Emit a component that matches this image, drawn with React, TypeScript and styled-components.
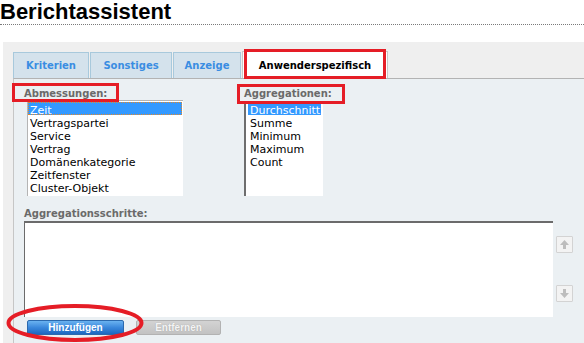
import React from "react";
import styled, { createGlobalStyle, css } from "styled-components";

const GlobalStyle = createGlobalStyle`
  html, body { margin: 0; padding: 0; background: #ffffff; }
  body {
    width: 584px;
    height: 343px;
    overflow: hidden;
    font-family: "DejaVu Sans", Verdana, sans-serif;
  }
  * { box-sizing: border-box; }
`;

const RED = "#e51d26";

type Inset = { t: number; r: number; b: number; l: number };

const annotate = (i: Inset) => css`
  position: relative;
  &::after {
    content: "";
    position: absolute;
    top: ${-i.t}px;
    right: ${-i.r}px;
    bottom: ${-i.b}px;
    left: ${-i.l}px;
    border: 3px solid ${RED};
    pointer-events: none;
  }
`;

const Page = styled.div`
  width: 584px;
  height: 343px;
  overflow: hidden;
  display: flex;
  flex-direction: column;
`;

const Title = styled.h1`
  margin: 0;
  padding: 0;
  height: 25px;
  font: bold 22px/24px "Liberation Sans", Arial, sans-serif;
  color: #000;
  border-bottom: 1px dotted #7a7a7a;
`;

const Panel = styled.div`
  margin: 17px 0 0 3px;
  flex: 1;
  background: #efefef;
  padding: 10px 0 0 10px;
  display: flex;
  flex-direction: column;
`;

const TabBar = styled.div`
  display: flex;
  align-items: flex-end;
  gap: 1px;
  height: 26px;
`;

const Tab = styled.div<{ $width: number; $active?: boolean }>`
  width: ${(p) => p.$width}px;
  height: 26px;
  display: flex;
  align-items: center;
  justify-content: center;
  padding-top: 1px;
  background: #d4e2ec;
  border: 1px solid #a8c9dc;
  border-bottom: none;
  color: #3a8de2;
  font: bold 10px/12px "DejaVu Sans", Verdana, sans-serif;
  white-space: nowrap;
  ${(p) =>
    p.$active &&
    css`
      height: 27px;
      background: #ffffff;
      border-color: #c8c8c8;
      color: #000000;
      ${annotate({ t: 3, r: -1, b: 1, l: -1 })}
    `}
`;

const Content = styled.div`
  flex: 1;
  background: #ebf0f3;
  border-top: 1px solid #b3b3b3;
  border-left: 1px solid #c6c6c6;
  padding: 8px 0 0 10px;
  display: flex;
  flex-direction: column;
`;

const SelectorRow = styled.div`
  display: flex;
  gap: 61px;
`;

const Column = styled.div<{ $width: number }>`
  width: ${(p) => p.$width}px;
  display: flex;
  flex-direction: column;
`;

const FieldLabel = styled.span<{ $mark?: Inset }>`
  align-self: flex-start;
  font: bold 10px/13px "DejaVu Sans", Verdana, sans-serif;
  color: #6a6a6a;
  white-space: nowrap;
  ${(p) => p.$mark && annotate(p.$mark)}
`;

const StepsLabel = styled(FieldLabel)`
  margin-top: 11px;
`;

const ListBox = styled.div<{ $width: number; $height: number; $variant: "soft" | "dark" }>`
  width: ${(p) => p.$width}px;
  height: ${(p) => p.$height}px;
  background: #ffffff;
  font: 11px/13px "DejaVu Sans", Verdana, sans-serif;
  color: #000;
  ${(p) =>
    p.$variant === "soft"
      ? css`
          margin: 0 0 0 3px;
          border-top: 1px solid #b4b4b4;
          border-left: 1px solid #b4b4b4;
          padding: 1px 1px 0 0;
        `
      : css`
          margin: 2px 0 0 0;
          border-left: 2px solid #6e6e6e;
          padding: 0 2px 0 2px;
        `}
`;

const ListItem = styled.div<{ $selected?: boolean; $focused?: boolean }>`
  height: 13px;
  line-height: 13px;
  padding: 2px 0 0 2px;
  white-space: nowrap;
  ${(p) =>
    p.$selected &&
    css`
      background: #3399ff;
      color: #ffffff;
    `}
  ${(p) =>
    p.$focused &&
    css`
      outline: 1px dotted #e4892a;
      outline-offset: -1px;
    `}
`;

const StepsRow = styled.div`
  display: flex;
  gap: 3px;
  margin-top: 1px;
`;

const StepsBox = styled.div`
  width: 529px;
  height: 96px;
  background: #ffffff;
  border-top: 2px solid #6b6b6b;
  border-left: 1px solid #6b6b6b;
`;

const ArrowColumn = styled.div`
  display: flex;
  flex-direction: column;
  justify-content: center;
  gap: 32px;
`;

const ArrowButton = styled.div`
  width: 17px;
  height: 17px;
  background: #f3f3f3;
  border: 1px solid #d3d3d3;
  border-radius: 1px;
  display: flex;
  align-items: center;
  justify-content: center;
`;

const ButtonRow = styled.div`
  position: relative;
  display: flex;
  gap: 12px;
  margin-top: 3px;
  padding-left: 3px;
`;

const Button = styled.div<{ $width: number; $primary?: boolean }>`
  width: ${(p) => p.$width}px;
  height: 15px;
  border-radius: 2px;
  display: flex;
  align-items: center;
  justify-content: center;
  font: bold 10px/12px "Liberation Sans", Arial, sans-serif;
  ${(p) =>
    p.$primary
      ? css`
          background: linear-gradient(#6ab2f0, #3a88dc 50%, #1c67c0);
          border: 1px solid #2b69ad;
          color: #ffffff;
        `
      : css`
          background: linear-gradient(#d3d3d3, #c2c2c2);
          border: 1px solid #b2b2b2;
          color: #f4f4f4;
          text-shadow: 0 0 1px #9a9a9a;
        `}
`;

const Ellipse = styled.svg`
  position: absolute;
  left: -18px;
  top: -16px;
  overflow: visible;
  pointer-events: none;
`;

const Arrow = ({ dir }: { dir: "up" | "down" }) => (
  <svg width="11" height="11" viewBox="0 0 11 11">
    <polygon
      points={dir === "up" ? "5.5,1 10,6 7,6 7,10 4,10 4,6 1,6" : "5.5,10 10,5 7,5 7,1 4,1 4,5 1,5"}
      fill="#bdbdbd"
    />
  </svg>
);

const dimensions = [
  "Zeit",
  "Vertragspartei",
  "Service",
  "Vertrag",
  "Domänenkategorie",
  "Zeitfenster",
  "Cluster-Objekt",
];

const aggregations = ["Durchschnitt", "Summe", "Minimum", "Maximum", "Count"];

export default function App() {
  return (
    <>
      <GlobalStyle />
      <Page>
        <Title>Berichtassistent</Title>
        <Panel>
          <TabBar>
            <Tab $width={76}>Kriterien</Tab>
            <Tab $width={82}>Sonstiges</Tab>
            <Tab $width={68}>Anzeige</Tab>
            <Tab $width={146} $active>
              Anwenderspezifisch
            </Tab>
          </TabBar>
          <Content>
            <SelectorRow>
              <Column $width={159}>
                <FieldLabel $mark={{ t: 4, r: 12, b: 2, l: 12 }}>Abmessungen:</FieldLabel>
                <ListBox $width={156} $height={96} $variant="soft">
                  {dimensions.map((d, i) => (
                    <ListItem key={d} $selected={i === 0} $focused={i === 0}>
                      {d}
                    </ListItem>
                  ))}
                </ListBox>
              </Column>
              <Column $width={100}>
                <FieldLabel $mark={{ t: 3, r: 13, b: 4, l: 7 }}>Aggregationen:</FieldLabel>
                <ListBox $width={79} $height={94} $variant="dark">
                  {aggregations.map((a, i) => (
                    <ListItem key={a} $selected={i === 0}>
                      {a}
                    </ListItem>
                  ))}
                </ListBox>
              </Column>
            </SelectorRow>
            <StepsLabel>Aggregationsschritte:</StepsLabel>
            <StepsRow>
              <StepsBox />
              <ArrowColumn>
                <ArrowButton>
                  <Arrow dir="up" />
                </ArrowButton>
                <ArrowButton>
                  <Arrow dir="down" />
                </ArrowButton>
              </ArrowColumn>
            </StepsRow>
            <ButtonRow>
              <Button $width={97} $primary>
                Hinzufügen
              </Button>
              <Button $width={85}>Entfernen</Button>
              <Ellipse width="138" height="39" viewBox="0 0 138 39">
                <ellipse cx="69" cy="19" rx="66.5" ry="17" fill="none" stroke={RED} strokeWidth="4" />
              </Ellipse>
            </ButtonRow>
          </Content>
        </Panel>
      </Page>
    </>
  );
}
